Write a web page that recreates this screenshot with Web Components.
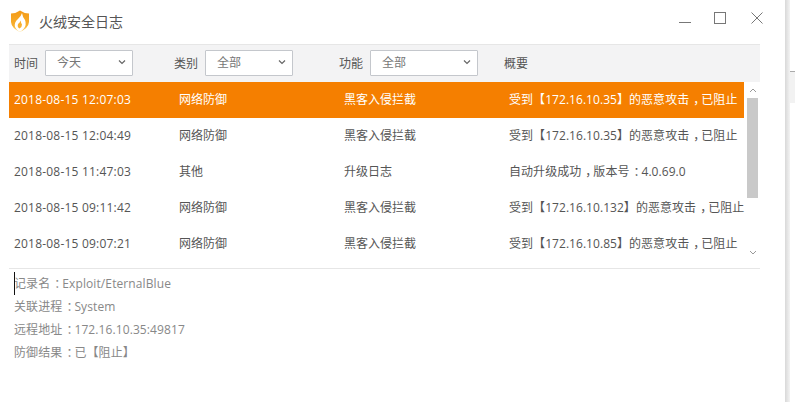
<!DOCTYPE html>
<html lang="zh">
<head>
<meta charset="utf-8">
<title>火绒安全日志</title>
<style>
  html, body { margin: 0; height: 100%; background: #fff; }
  body { font: 12px "Open Sans", "Noto Sans CJK SC", sans-serif; color: #555; overflow: hidden; }
  .sum { padding-bottom: 1px; }
</style>
</head>
<body>
<log-window>
  <title-bar slot="title">火绒安全日志</title-bar>
  <filter-bar slot="filters">
    <filter-select label="时间" value="今天" width="88"></filter-select>
    <filter-select label="类别" value="全部" width="88"></filter-select>
    <filter-select label="功能" value="全部" width="108"></filter-select>
    <span class="sum">概要</span>
  </filter-bar>
  <log-table slot="table">
    <log-row selected time="2018-08-15 12:07:03" kind="网络防御" func="黑客入侵拦截" text="受到【172.16.10.35】的恶意攻击，已阻止"></log-row>
    <log-row time="2018-08-15 12:04:49" kind="网络防御" func="黑客入侵拦截" text="受到【172.16.10.35】的恶意攻击，已阻止"></log-row>
    <log-row time="2018-08-15 11:47:03" kind="其他" func="升级日志" text="自动升级成功，版本号：4.0.69.0"></log-row>
    <log-row time="2018-08-15 09:11:42" kind="网络防御" func="黑客入侵拦截" text="受到【172.16.10.132】的恶意攻击，已阻止"></log-row>
    <log-row time="2018-08-15 09:07:21" kind="网络防御" func="黑客入侵拦截" text="受到【172.16.10.85】的恶意攻击，已阻止"></log-row>
  </log-table>
  <detail-panel slot="detail">
    <detail-line text="记录名：Exploit/EternalBlue"></detail-line>
    <detail-line text="关联进程：System"></detail-line>
    <detail-line text="远程地址：172.16.10.35:49817"></detail-line>
    <detail-line text="防御结果：已【阻止】"></detail-line>
  </detail-panel>
</log-window>

<script>
// full width comma and colon sit in the middle of their cell in the original font
const punct = s => s.replace(/[，：]/g, c => `<span class="p">${c}</span>`);
const punctCss = `.p { padding-left: 4px; letter-spacing: -4px; }`;

class LogWindow extends HTMLElement {
  constructor() {
    super();
    this.attachShadow({ mode: "open" });
    this.shadowRoot.innerHTML = `
      <style>
        :host { display: flex; height: 402px; width: 795px; }
        .main { width: 785px; display: flex; flex-direction: column; }
        .edge { width: 5px; background: linear-gradient(90deg, #d8d8d8, #f3f3f3); }
        .rest { width: 5px; }
        .rest i { display: block; height: 31px; margin-top: 71px; border-top: 1px solid #aaa; background: #f2f2f2; }
      </style>
      <div class="main">
        <slot name="title"></slot>
        <slot name="filters"></slot>
        <slot name="table"></slot>
        <slot name="detail"></slot>
      </div>
      <div class="edge"></div>
      <div class="rest"><i></i></div>
    `;
  }
}

class TitleBar extends HTMLElement {
  constructor() {
    super();
    this.attachShadow({ mode: "open" });
    this.shadowRoot.innerHTML = `
      <style>
        :host { display: flex; align-items: center; height: 44px; padding: 0 0 2px 10px; box-sizing: border-box; }
        .title { margin-left: 9px; font-size: 14px; color: #555; }
        .btns { margin-left: auto; margin-right: 22px; display: flex; align-items: center; margin-top: -7px; }
        .btns svg:nth-child(2) { margin: 0 25px 0 23px; }
        svg { display: block; }
      </style>
      <svg width="20" height="22" viewBox="0 0 20 22">
        <defs>
          <linearGradient id="g" x1="0" y1="0" x2="0" y2="1">
            <stop offset="0" stop-color="#f39a17"/><stop offset=".7" stop-color="#f8b02e"/><stop offset="1" stop-color="#fcd87a"/>
          </linearGradient>
        </defs>
        <path d="M1 3.5 Q6 3.5 10 0.5 Q14 3.5 19 3.5 V12 Q18.5 18 10 22 Q1.5 18 1 12 Z" fill="url(#g)"/>
        <path d="M12 3 Q12.5 7 15 10 Q17 15 13.5 19 Q11.5 21 10 22 Q6.5 20.5 5 17 Q3.8 12.5 8 9 Q11 6.5 12 3 Z" fill="#fff"/>
        <path d="M10.5 10.5 Q11 13 12 14.5 Q12 17.5 9.5 18.5 Q7 17 8 14 Q10 12.5 10.5 10.5 Z" fill="#f8b02e"/>
      </svg>
      <span class="title"><slot></slot></span>
      <div class="btns">
        <svg width="12" height="12" viewBox="0 0 12 12"><path d="M0 10.5H12" stroke="#777"/></svg>
        <svg width="12" height="12" viewBox="0 0 12 12"><rect x=".5" y=".5" width="11" height="11" fill="none" stroke="#777"/></svg>
        <svg width="12" height="12" viewBox="0 0 12 12"><path d="M.5.5 11.5 11.5M11.5.5 .5 11.5" stroke="#777" fill="none"/></svg>
      </div>
    `;
  }
}

class FilterBar extends HTMLElement {
  constructor() {
    super();
    this.attachShadow({ mode: "open" });
    this.shadowRoot.innerHTML = `
      <style>
        :host {
          display: grid; grid-template-columns: 160px 165px 165px 1fr; align-items: center;
          height: 38px; margin: 0 25px 0 9px; padding: 0 0 1px 5px; box-sizing: border-box;
          background: #f3f3f4; border-top: 1px solid #e6e6e6; color: #555;
        }
      </style>
      <slot></slot>
    `;
  }
}

class FilterSelect extends HTMLElement {
  constructor() {
    super();
    this.attachShadow({ mode: "open" });
    const w = this.getAttribute("width");
    this.shadowRoot.innerHTML = `
      <style>
        :host { display: flex; align-items: center; gap: 7px; }
        .label { padding-bottom: 1px; }
        .box {
          width: ${w}px; height: 26px; box-sizing: border-box; display: flex; align-items: center;
          padding: 0 6px 2px 11px; background: #fff; border: 1px solid #c4c7cc; border-radius: 1px; color: #777;
        }
        svg { margin-left: auto; }
      </style>
      <span class="label">${this.getAttribute("label")}</span>
      <div class="box">
        <span>${this.getAttribute("value")}</span>
        <svg width="8" height="6" viewBox="0 0 8 6"><path d="M1 1.5 4 4.5 7 1.5" fill="none" stroke="#666" stroke-width="1.2"/></svg>
      </div>
    `;
  }
}

class LogTable extends HTMLElement {
  constructor() {
    super();
    this.attachShadow({ mode: "open" });
    this.shadowRoot.innerHTML = `
      <style>
        :host { display: flex; margin-left: 9px; margin-right: 25px; height: 186px; border-bottom: 1px solid #e6e6e6; }
        .rows { width: 735px; }
        .bar { width: 11px; margin-left: 3px; display: flex; flex-direction: column; align-items: center; }
        .up { height: 16px; display: flex; align-items: center; justify-content: center; }
        .thumb { width: 100%; height: 100px; background: #c9c9c9; }
        .down { margin-top: 46px; height: 16px; display: flex; align-items: center; justify-content: center; }
      </style>
      <div class="rows"><slot></slot></div>
      <div class="bar">
        <div class="up"><svg width="8" height="5" viewBox="0 0 8 5"><path d="M1 4 4 1 7 4" fill="none" stroke="#999"/></svg></div>
        <div class="thumb"></div>
        <div class="down"><svg width="8" height="5" viewBox="0 0 8 5"><path d="M1 1 4 4 7 1" fill="none" stroke="#999"/></svg></div>
      </div>
    `;
  }
}

class LogRow extends HTMLElement {
  constructor() {
    super();
    this.attachShadow({ mode: "open" });
    const a = n => this.getAttribute(n);
    this.shadowRoot.innerHTML = `
      <style>
        :host {
          display: grid; grid-template-columns: 165px 165px 165px 1fr; align-items: center;
          height: 36px; padding: 0 0 2px 5px; box-sizing: border-box; color: #555; white-space: nowrap;
        }
        :host([selected]) { background: #f57f00; color: #fff; }
        .time { letter-spacing: .2px; }
        .text { letter-spacing: .05px; }
        ${punctCss}
      </style>
      <span class="time">${a("time")}</span><span>${a("kind")}</span><span>${a("func")}</span><span class="text">${punct(a("text"))}</span>
    `;
  }
}

class DetailPanel extends HTMLElement {
  constructor() {
    super();
    this.attachShadow({ mode: "open" });
    this.shadowRoot.innerHTML = `
      <style>
        :host { display: block; position: relative; padding: 3px 0 0 14px; }
        .caret { position: absolute; left: 14px; top: 3px; width: 1px; height: 23px; background: #111; }
      </style>
      <div class="caret"></div>
      <slot></slot>
    `;
  }
}

class DetailLine extends HTMLElement {
  constructor() {
    super();
    this.attachShadow({ mode: "open" });
    this.shadowRoot.innerHTML = `
      <style>
        :host { display: block; line-height: 23px; color: #888; letter-spacing: .1px; }
        ${punctCss}
      </style>
      ${punct(this.getAttribute("text"))}
    `;
  }
}

customElements.define("log-window", LogWindow);
customElements.define("title-bar", TitleBar);
customElements.define("filter-bar", FilterBar);
customElements.define("filter-select", FilterSelect);
customElements.define("log-table", LogTable);
customElements.define("log-row", LogRow);
customElements.define("detail-panel", DetailPanel);
customElements.define("detail-line", DetailLine);
</script>
</body>
</html>
